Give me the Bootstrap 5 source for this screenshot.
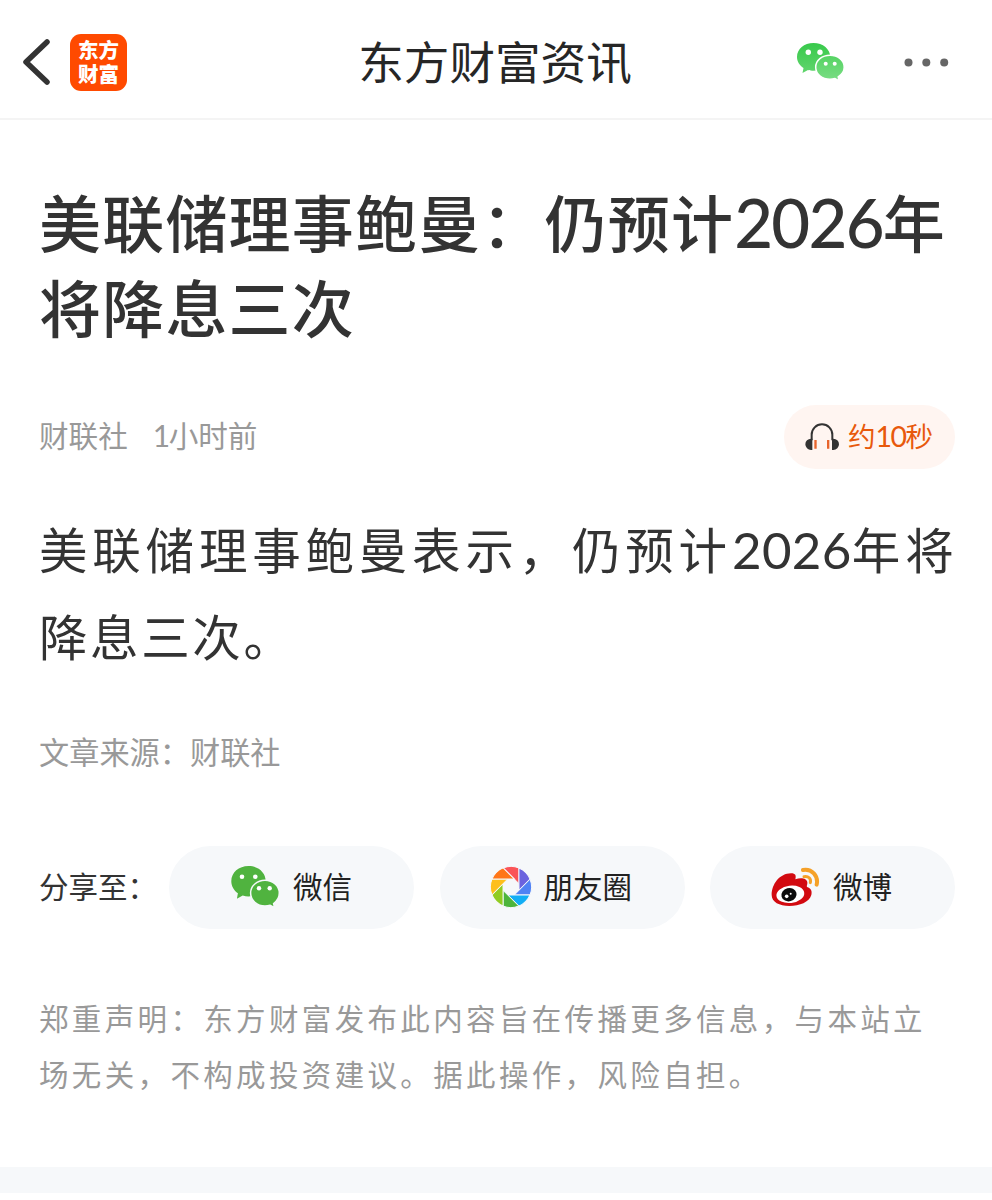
<!DOCTYPE html>
<html lang="zh-CN">
<head>
<meta charset="utf-8">
<meta name="viewport" content="width=device-width, initial-scale=1">
<title>东方财富资讯</title>
<link href="https://cdn.jsdelivr.net/npm/bootstrap@5.3.0/dist/css/bootstrap.min.css" rel="stylesheet">
<style>
body{font-family:"Noto Sans CJK SC",sans-serif;color:#333;background:#fff;overflow-x:hidden}
svg{display:block;flex:none}
.topbar{height:120px;border-bottom:2px solid #f4f4f4;padding:0 43px 0 22px}
.side{width:280px;height:118px;padding-top:6px}
.brand{width:57px;height:57px;border-radius:11px;background:#ff4a00;color:#fff;font-weight:900;font-size:20.5px;line-height:24px;padding-top:3px;margin-left:20px}
.bar-title{font-size:45.6px;line-height:60px;color:#262626;padding:2px 0 0 19px;white-space:nowrap}
.article{padding:0 37px 0 39px}
.line{white-space:nowrap;display:block}
.num{font-family:Lato,sans-serif;line-height:1}
.headline{font-size:62px;letter-spacing:1.2px;line-height:85px;height:170px;font-weight:500;margin:59px 0 0}
.headline .num{font-size:67px;letter-spacing:-1.7px}
.headline .line{height:85px}
.meta{height:64px;margin-top:56px;font-size:29.6px;color:#999}
.meta-text{padding-bottom:3px}
.meta .num{font-size:30px;letter-spacing:-1.5px}
.listen{width:171px;height:64px;background:#fff5f1;color:#e8590c;font-size:27.5px;padding-left:21px}
.listen-text{margin-left:9px;padding-bottom:3px}
.listen .num{font-size:28.5px;letter-spacing:-1.5px}
.copy{font-size:48.5px;line-height:87px;height:174px;margin:36px 0 0}
.copy .line{height:87px}
.copy .a{letter-spacing:4.8px}
.copy .b{letter-spacing:2.6px}
.copy .num{font-size:51px;letter-spacing:.4px}
.origin{font-size:30.2px;line-height:44px;color:#999;margin-top:50px}
.share{margin-top:73px;height:83px;font-size:29.5px}
.share-label{width:130px;white-space:nowrap;padding-bottom:5px}
.share-btn{width:245px;height:83px;background:#f6f8fa;color:#222;font-size:29.5px;border:0;padding:0 0 1px}
.share-btn span{padding-bottom:4px}
.notice{font-size:29.5px;letter-spacing:3.35px;line-height:56px;color:#999;margin:60px 0 0}
.band{height:26px;background:#f6f8fa;margin-top:66px}
</style>
</head>
<body>
<header class="topbar d-flex justify-content-between">
  <div class="side d-flex align-items-center">
    <svg width="28" height="46" viewBox="0 0 28 46"><path d="M25 3 4 23 25 43" fill="none" stroke="#333" stroke-width="5.500" stroke-linecap="round" stroke-linejoin="round"/></svg>
    <div class="brand text-center">东方财富</div>
  </div>
  <div class="bar-title d-flex align-items-center">东方财富资讯</div>
  <div class="side d-flex align-items-center justify-content-end">
    <svg width="49" height="40" viewBox="796 42 49 40">
      <defs><linearGradient id="wg" x1="0" y1="0" x2="0" y2="1"><stop offset="0" stop-color="#38c94b"/><stop offset="1" stop-color="#61d56d"/></linearGradient>
      <linearGradient id="wh" x1="0" y1="0" x2="0" y2="1"><stop offset="0" stop-color="#55d363"/><stop offset="1" stop-color="#7add84"/></linearGradient></defs>
      <path d="M813.5 43C804 43 797 49 797 57c0 4.500 2.500 8.500 6.500 11l-1 5 5.500-3c2 .6 3.500.8 5.500.8 9.500 0 16.800-6 16.800-13.800S823 43 813.500 43z" fill="url(#wg)"/>
      <path d="M830 55.200c-8 0-14.300 5.300-14.300 12s6.300 12 14.300 12c1.700 0 3.400-.3 5-.7l4 2.300-.8-4c3.500-2.200 6-5.600 6-9.600 0-6.700-6.200-12-14.200-12z" fill="url(#wh)" stroke="#fff" stroke-width="1.500"/>
      <g fill="#fff"><circle cx="808.300" cy="52.300" r="2.700"/><circle cx="820" cy="52.300" r="2.700"/><circle cx="825.700" cy="63.700" r="2"/><circle cx="834.700" cy="63.700" r="2"/></g>
    </svg>
    <svg width="45" height="10" viewBox="0 0 45 10" style="margin-left:59px"><g fill="#666"><circle cx="4.500" cy="5.500" r="4"/><circle cx="22.300" cy="5.500" r="4"/><circle cx="40.200" cy="5.500" r="4"/></g></svg>
  </div>
</header>
<main>
  <article class="article">
    <h1 class="headline"><span class="line">美联储理事鲍曼：仍预计<span class="num">2026</span>年</span><span class="line">将降息三次</span></h1>
    <div class="meta d-flex align-items-center justify-content-between">
      <div class="meta-text d-flex"><span>财联社</span><span style="margin-left:25px"><span class="num">1</span>小时前</span></div>
      <div class="listen rounded-pill d-flex align-items-center">
        <svg width="34" height="28" viewBox="106 84 102 84"><path d="M126 136v-17a31 31 0 0 1 62 0v17" fill="none" stroke="#333" stroke-width="6"/><path d="M128 131v34h-4a17 17 0 0 1 0-34zM187 131v34h4a17 17 0 0 0 0-34z" fill="#333"/><path d="M134 135h7v26h-7zM172 135h7v26h-7z" fill="#e8642c"/></svg>
        <span class="listen-text text-nowrap">约<span class="num">10</span>秒</span>
      </div>
    </div>
    <p class="copy"><span class="line a">美联储理事鲍曼表示，仍预计<span class="num">2026</span>年将</span><span class="line b">降息三次。</span></p>
    <div class="origin">文章来源：财联社</div>
    <div class="share d-flex align-items-center">
      <span class="share-label">分享至：</span>
      <div class="d-flex flex-grow-1 justify-content-between">
        <button class="share-btn rounded-pill d-flex align-items-center" style="padding-left:62px">
          <svg width="49" height="42" viewBox="231 866 49 42"><path d="M248.500 866c-9.700 0-17.200 6.600-17.200 15.200 0 5 2.600 9.200 6.600 12l-1 5.600 5.800-3.200c1.900.6 3.800.9 5.800.9 9.700 0 17.200-6.700 17.200-15.300S258.200 866 248.500 866z" fill="#50b33f"/><path d="M265 880.300c-8 0-14.400 5.700-14.400 12.800S257 906 265 906c1.900 0 3.600-.3 5.200-.8l4.300 2.400-.9-4.100c3.400-2.400 5.700-6.200 5.700-10.400 0-7.100-6.400-12.800-14.300-12.800z" fill="#50b33f" stroke="#f6f8fb" stroke-width="1.500"/><g fill="#fff"><circle cx="242" cy="876.700" r="2.300"/><circle cx="255.300" cy="876.700" r="2.300"/><circle cx="259" cy="888.300" r="2.200"/><circle cx="269.700" cy="888.300" r="2.200"/></g></svg>
          <span style="margin-left:13px">微信</span>
        </button>
        <button class="share-btn rounded-pill d-flex align-items-center" style="padding-left:50px">
          <svg width="42" height="42" viewBox="-21 -21 42 42"><defs><path id="blade" d="M-7.800-19A20.500 20.500 0 0 1 8-19V-3.300z" stroke="#f6f8fb" stroke-width="1"/></defs>
            <use href="#blade" fill="#fa5457"/><use href="#blade" fill="#6b62de" transform="rotate(45)"/><use href="#blade" fill="#4f82f4" transform="rotate(90)"/><use href="#blade" fill="#12aef5" transform="rotate(135)"/><use href="#blade" fill="#4db53b" transform="rotate(180)"/><use href="#blade" fill="#91cc22" transform="rotate(225)"/><use href="#blade" fill="#fdbf1c" transform="rotate(270)"/><use href="#blade" fill="#ff7618" transform="rotate(315)"/></svg>
          <span style="margin-left:12px">朋友圈</span>
        </button>
        <button class="share-btn rounded-pill d-flex align-items-center" style="padding-left:61px">
          <svg width="49" height="40" viewBox="213 96 147 120"><path d="M215 180c0-32 24-65 58-65 14 0 16 7 13 18 16-6 34-4 36 9 1 7-3 10-1 14 12 4 16 12 13 24-6 21-35 33-66 33-30 0-53-12-53-33z" fill="#d20a10"/><ellipse cx="271" cy="178" rx="42" ry="26" fill="#fff" transform="rotate(-7 271 178)"/><ellipse cx="267" cy="179" rx="23" ry="20" fill="#0c0c0c" transform="rotate(-15 267 179)"/><circle cx="260" cy="184" r="5.500" fill="#fff"/><circle cx="272" cy="176" r="3" fill="#fff"/><g fill="none" stroke="#f5a128" stroke-linecap="round"><path d="M309 105c26-5 47 18 41 44" stroke-width="12"/><path d="M312 125c13-3 22 6 19 18" stroke-width="9"/></g></svg>
          <span style="margin-left:13px">微博</span>
        </button>
      </div>
    </div>
    <p class="notice"><span class="line">郑重声明：东方财富发布此内容旨在传播更多信息，与本站立</span><span class="line">场无关，不构成投资建议。据此操作，风险自担。</span></p>
  </article>
  <div class="band"></div>
</main>
<script src="https://cdn.jsdelivr.net/npm/bootstrap@5.3.0/dist/js/bootstrap.bundle.min.js"></script>
</body>
</html>
